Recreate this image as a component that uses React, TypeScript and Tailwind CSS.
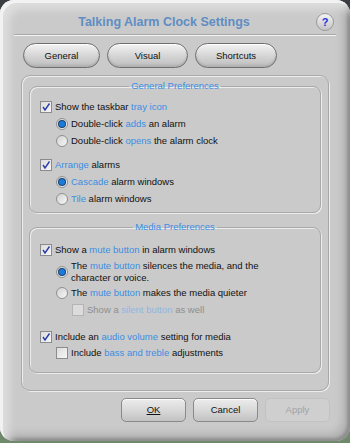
import React from 'react';

const font = { fontFamily: '"Liberation Sans", Arial, sans-serif' };

type Part = string | { b: string };

const Text: React.FC<{ parts: Part[]; disabled?: boolean }> = ({ parts, disabled }) => (
  <span className={`whitespace-nowrap ${disabled ? 'text-[#8e8e8e]' : 'text-[#111]'}`}>
    {parts.map((p, i) =>
      typeof p === 'string' ? (
        <span key={i}>{p}</span>
      ) : (
        <span key={i} className={disabled ? 'text-[#8fb6e2]' : 'text-[#3a8ee4]'}>
          {p.b}
        </span>
      )
    )}
  </span>
);

const Check: React.FC<{ on?: boolean; disabled?: boolean }> = ({ on, disabled }) => (
  <span
    className={`shrink-0 w-[12px] h-[12px] border flex items-center justify-center ${
      disabled ? 'border-[#b4b4b4] bg-[#dcdcdc]' : 'border-[#8a8b8c] bg-linear-to-br from-[#dcdcdc] to-[#f6f6f6]'
    }`}
  >
    {on && (
      <svg width="10" height="10" viewBox="0 0 10 10">
        <path d="M2 5 L4 8 L8.5 1.5" fill="none" stroke="#2a3aa8" strokeWidth="1.4" />
      </svg>
    )}
  </span>
);

const Radio: React.FC<{ on?: boolean }> = ({ on }) => (
  <span className="shrink-0 w-[12px] h-[12px] rounded-full border border-[#8f9090] bg-linear-to-br from-[#d2d2d2] to-[#f7f7f7] flex items-center justify-center">
    {on && <span className="w-[6px] h-[6px] rounded-full bg-[#1c7bd8] ring-1 ring-[#1a4370]" />}
  </span>
);

const Row: React.FC<{ kind: 'check' | 'radio'; on?: boolean; disabled?: boolean; indent?: string; parts: Part[]; className?: string }> = ({
  kind,
  on,
  disabled,
  indent = 'pl-0',
  parts,
  className = '',
}) => (
  <div className={`flex items-center gap-[3px] h-[17px] ${indent} ${className}`}>
    {kind === 'check' ? <Check on={on} disabled={disabled} /> : <Radio on={on} />}
    <Text parts={parts} disabled={disabled} />
  </div>
);

const Group: React.FC<{ title: string; className?: string; children: React.ReactNode }> = ({ title, className = '', children }) => (
  <fieldset className={`border border-[#a9a9a9] rounded-[8px] shadow-[inset_1px_1px_0_#ececec,1px_1px_0_#ececec] px-[10px] ${className}`}>
    <legend className="mx-auto px-[2px] leading-[12px] text-[#3a8ee4]">{title}</legend>
    {children}
  </fieldset>
);

const Pill: React.FC<{ label: string; className?: string }> = ({ label, className = '' }) => (
  <div
    className={`h-[25px] rounded-full border border-[#6e6e6e] bg-linear-to-b from-[#f3f3f3] via-[#d6d6d6] to-[#bdbdbd] shadow-[inset_0_1px_0_#fff,inset_0_-2px_2px_#b0b0b0] flex items-center justify-center text-[#111] ${className}`}
  >
    {label}
  </div>
);

const Btn: React.FC<{ children: React.ReactNode; disabled?: boolean }> = ({ children, disabled }) => (
  <div
    className={`w-[65px] h-[24px] rounded-[5px] flex items-center justify-center ${
      disabled
        ? 'border border-[#c2c2c2] bg-[#cfcfcf] text-[#a3a3a3]'
        : 'border border-[#8a8a8a] bg-linear-to-b from-[#ececec] via-[#d9d9d9] to-[#c2c2c2] shadow-[inset_0_1px_0_#fafafa] text-[#111]'
    }`}
  >
    {children}
  </div>
);

export default function App() {
  return (
    <div className="w-[350px] h-[443px] bg-linear-to-b from-[#3a3d42] via-[#4b5548] to-[#6e8a6a] overflow-hidden" style={font}>
      <div className="w-[350px] h-[441px] rounded-[14px] bg-[#cacaca] shadow-[inset_3px_3px_0_#f2f2f2,inset_9px_9px_8px_#dedede,inset_-3px_-3px_3px_#8e8e8e,inset_-8px_-8px_7px_#b4b4b4] flex flex-col px-[14px] pt-[10px] text-[9.5px] leading-[12px]">
        {/* title */}
        <div className="h-[24px] flex items-center relative">
          <div className="flex-1 text-center text-[12.5px] leading-[16px] font-bold text-[#5f8dc4] pr-[22px]">Talking Alarm Clock Settings</div>
          <div className="absolute right-[2px] top-[3px] w-[18px] h-[18px] rounded-full border border-[#9a9a9a] bg-linear-to-b from-[#f4f4f4] to-[#c4c4c4] flex items-center justify-center text-[11px] font-bold text-[#2233dd]">
            ?
          </div>
        </div>
        <div className="h-[2px] border-t border-[#a8a8a8] border-b border-b-[#f4f4f4]" />

        {/* tabs */}
        <div className="flex gap-[7px] pl-[9px] mt-[7px]">
          <Pill label="General" className="w-[77px]" />
          <Pill label="Visual" className="w-[81px]" />
          <Pill label="Shortcuts" className="w-[82px]" />
        </div>

        {/* panel */}
        <div className="mt-[7px] ml-[7px] w-[308px] h-[316px] rounded-[9px] border border-[#a9a9a9] shadow-[inset_1px_1px_0_#ededed,1px_1px_0_#ededed] px-[7px] pt-[4px]">
          <Group title="General Preferences" className="h-[133px]">
            <div className="pt-[6px]">
              <Row kind="check" on parts={['Show the taskbar ', { b: 'tray icon' }]} />
              <Row kind="radio" on indent="pl-[16px]" parts={['Double-click ', { b: 'adds' }, ' an alarm']} />
              <Row kind="radio" indent="pl-[16px]" parts={['Double-click ', { b: 'opens' }, ' the alarm clock']} />
              <Row kind="check" on className="mt-[7px]" parts={[{ b: 'Arrange' }, ' alarms']} />
              <Row kind="radio" on indent="pl-[16px]" parts={[{ b: 'Cascade' }, ' alarm windows']} />
              <Row kind="radio" indent="pl-[16px]" parts={[{ b: 'Tile' }, ' alarm windows']} />
            </div>
          </Group>

          <Group title="Media Preferences" className="mt-[8px] h-[152px]">
            <div className="pt-[8px]">
              <Row kind="check" on parts={['Show a ', { b: 'mute button' }, ' in alarm windows']} />
              <div className="flex items-center gap-[3px] pl-[16px] mt-[2px]">
                <Radio on />
                <span className="text-[#111]">
                  The <span className="text-[#3a8ee4]">mute button</span> silences the media, and the
                  <br />
                  character or voice.
                </span>
              </div>
              <Row kind="radio" indent="pl-[16px]" parts={['The ', { b: 'mute button' }, ' makes the media quieter']} />
              <Row kind="check" disabled indent="pl-[32px]" parts={['Show a ', { b: 'silent button' }, ' as well']} />
              <Row kind="check" on className="mt-[10px]" parts={['Include an ', { b: 'audio volume' }, ' setting for media']} />
              <Row kind="check" indent="pl-[16px]" className="-mt-[1px]" parts={['Include ', { b: 'bass and treble' }, ' adjustments']} />
            </div>
          </Group>
        </div>

        {/* buttons */}
        <div className="flex justify-end gap-[7px] mt-[7px] pr-[6px]">
          <Btn>
            <span className="underline">OK</span>
          </Btn>
          <Btn>Cancel</Btn>
          <Btn disabled>Apply</Btn>
        </div>
      </div>
    </div>
  );
}
